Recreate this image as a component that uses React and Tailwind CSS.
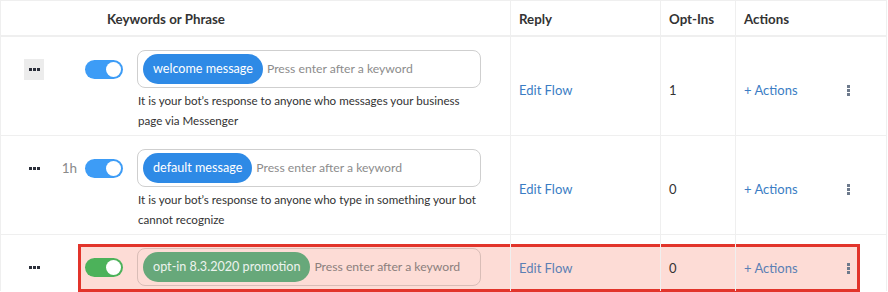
import React from 'react';

const font = { fontFamily: 'Lato, "Noto Sans", sans-serif' };

function Dots({ active }) {
    return (
        <div className={`w-[20px] h-[21px] flex items-center justify-center gap-[1px] ${active ? "bg-[#ececec]" : ""}`}>
            <span className="w-[3px] h-[3px] bg-[#2b2f3a]" />
            <span className="w-[3px] h-[3px] bg-[#2b2f3a]" />
            <span className="w-[3px] h-[3px] bg-[#2b2f3a]" />
        </div>
    );
}

function Kebab() {
    return (
        <div className="flex flex-col gap-[1px]">
            <span className="w-[3px] h-[3px] bg-[#6d7a8c]" />
            <span className="w-[3px] h-[3px] bg-[#6d7a8c]" />
            <span className="w-[3px] h-[3px] bg-[#6d7a8c]" />
        </div>
    );
}

function Toggle({ green }) {
    return (
        <div className={`w-[38px] h-[19px] rounded-full flex items-center justify-end pr-[2px] ${green ? "bg-[#4cb25a]" : "bg-[#3d9cf6]"}`}>
            <span className="w-[15px] h-[15px] rounded-full bg-white" />
        </div>
    );
}

function Row({ tag, note, count, age, active, highlight, last }) {
    const cell = last ? "pt-[11px]" : "pt-[9px]";
    const link = highlight ? "text-[#5b7fb4]" : "text-[#3b7dc4]";
    return (
        <div className={`relative grid grid-cols-[510px_150px_75px_151px] ${last ? "h-[56px]" : "h-[99px] border-b border-[#efefef]"}`}>
            {highlight && (
                <div className="absolute left-[77px] top-[9px] w-[782px] h-[48px] bg-[#fddcd6] border-[3px] border-[#e2342b]" />
            )}
            <div className="relative flex items-start pt-[13px] border-r border-[#efefef]">
                <div className="w-[136px] h-[38px] flex items-center pl-[23px]">
                    <Dots active={active} />
                    <div className="flex-1 flex items-center justify-end pr-[14px] gap-[8px]">
                        {age && <span className="text-[13.5px] text-[#8a8a8a]">{age}</span>}
                        <Toggle green={highlight} />
                    </div>
                </div>
                <div className="w-[344px]">
                    <div className={`h-[38px] rounded-[8px] border flex items-center pl-[5px] gap-[4px] whitespace-nowrap ${highlight ? "border-[#d9bdb7]" : "border-[#cfcfcf]"}`}>
                        <span className={`h-[30px] rounded-full px-[10px] flex items-center text-[12.6px] ${highlight ? "bg-[#67a87a] text-[#edf3ee]" : "bg-[#2e8ae6] text-white"}`}>{tag}</span>
                        <span className={`text-[12.2px] ${highlight ? "text-[#8b7f7d]" : "text-[#8c8c8c]"}`}>Press enter after a keyword</span>
                    </div>
                    {note && <p className="mt-[3px] pl-[1px] text-[11.6px] leading-[20px] text-[#333]">{note}</p>}
                </div>
            </div>
            <div className={`relative flex items-center pl-[8px] border-r border-[#efefef] text-[13px] ${link} ${cell}`}>Edit Flow</div>
            <div className={`relative flex items-center pl-[8px] border-r border-[#efefef] text-[13px] text-[#333] ${cell}`}>{count}</div>
            <div className={`relative flex items-center pl-[8px] pr-[37px] justify-between text-[13px] ${link} ${cell}`}>
                <span>+ Actions</span>
                <Kebab />
            </div>
        </div>
    );
}

export default function App() {
    return (
        <div className="w-[888px] h-[292px] bg-white overflow-hidden" style={font}>
            <div className="w-[887px] border-l border-t border-r border-[#efefef]">
                <div className="grid grid-cols-[510px_150px_75px_151px] h-[36px] border-b-2 border-[#efefef] text-[13.3px] font-bold text-[#333]">
                    <div className="flex items-center pt-[3px] pl-[106px] border-r border-[#efefef]">Keywords or Phrase</div>
                    <div className="flex items-center pt-[3px] pl-[8px] border-r border-[#efefef]">Reply</div>
                    <div className="flex items-center pt-[3px] pl-[8px] border-r border-[#efefef]">Opt-Ins</div>
                    <div className="flex items-center pt-[3px] pl-[8px]">Actions</div>
                </div>
                <Row
                    tag="welcome message"
                    note="It is your bot’s response to anyone who messages your business page via Messenger"
                    count="1"
                    active
                />
                <Row
                    tag="default message"
                    note="It is your bot’s response to anyone who type in something your bot cannot recognize"
                    count="0"
                    age="1h"
                />
                <Row tag="opt-in 8.3.2020 promotion" count="0" highlight last />
            </div>
        </div>
    );
}
